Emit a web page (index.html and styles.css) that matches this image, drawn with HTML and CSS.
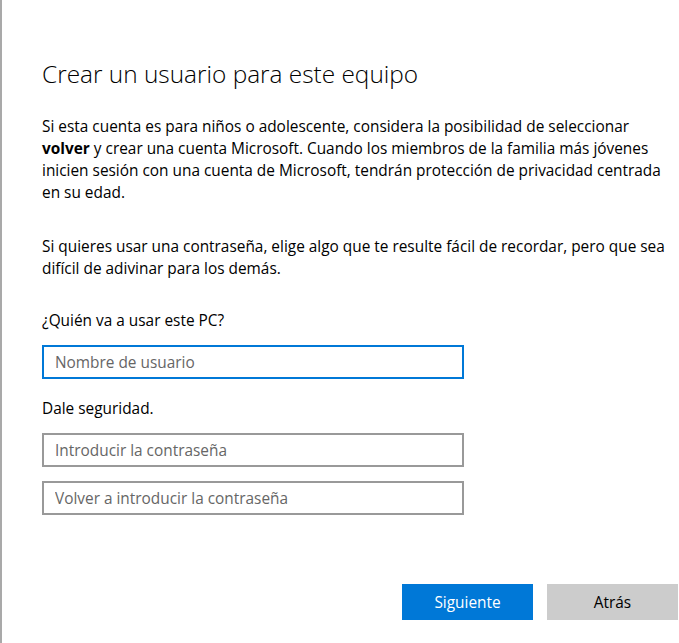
FILE: index.html
```html
<!DOCTYPE html>
<html lang="es">
<head>
    <meta charset="UTF-8">
    <meta name="viewport" content="width=device-width, initial-scale=1.0">
    <title>Crear un usuario para este equipo</title>
    <link rel="stylesheet" href="styles.css">
</head>
<body>

    <div class="window">
        <h1>Crear un usuario para este equipo</h1>

        <p class="intro">Si esta cuenta es para niños o adolescente, considera la posibilidad de seleccionar <b>volver</b> y crear una cuenta Microsoft. Cuando los miembros de la familia más jóvenes inicien sesión con una cuenta de Microsoft, tendrán protección de privacidad centrada en su edad.</p>

        <p class="hint">Si quieres usar una contraseña, elige algo que te resulte fácil de recordar, pero que sea difícil de adivinar para los demás.</p>

        <!-- Usuario -->
        <label class="field-label" for="userName">¿Quién va a usar este PC?</label>
        <input type="text" id="userName" class="field focused" placeholder="Nombre de usuario">

        <!-- Contraseña -->
        <label class="field-label second" for="password">Dale seguridad.</label>
        <input type="password" id="password" class="field" placeholder="Introducir la contraseña">
        <input type="password" id="passwordRepeat" class="field" placeholder="Volver a introducir la contraseña">

        <div class="buttons">
            <button type="button" class="btn primary">Siguiente</button>
            <button type="button" class="btn">Atrás</button>
        </div>
    </div>

</body>
</html>
```

FILE: styles.css
```css
body {
    margin: 0;
    padding: 0;
    background-color: #fff;
    color: #000;
    font-family: "Open Sans", "Noto Sans", sans-serif;
}

.window {
    min-height: 643px;
    box-sizing: border-box;
    border-left: 2px solid #a9a9a9;
    padding: 56px 0 0 40px;
}

h1 {
    margin: 0;
    font-size: 24.4px;
    font-weight: 300;
    line-height: 36px;
}

p {
    margin: 0;
    width: 630px;
    font-size: 15.4px;
    line-height: 22px;
}

.intro {
    margin-top: 24px;
}

.hint {
    margin-top: 32px;
}

.field-label {
    display: block;
    margin-top: 30px;
    font-size: 15.4px;
    line-height: 22px;
}

.field-label.second {
    margin-top: 19px;
}

.field {
    display: block;
    box-sizing: border-box;
    width: 422px;
    height: 34px;
    margin: 14px 0 0 0;
    padding: 0 11px;
    border: 2px solid #999;
    border-radius: 0;
    outline: none;
    background: #fff;
    font-family: inherit;
    font-size: 15.4px;
    color: #000;
}

.field-label + .field {
    margin-top: 13px;
}

.field.focused {
    border-color: #0078d7;
}

.field::placeholder {
    color: #666;
}

.buttons {
    display: flex;
    justify-content: flex-end;
    gap: 14px;
    margin-top: 69px;
    padding-right: 1px;
}

.btn {
    width: 131px;
    height: 36px;
    border: none;
    border-radius: 0;
    background-color: #ccc;
    color: #000;
    font-family: inherit;
    font-size: 15.4px;
    cursor: pointer;
}

.btn.primary {
    background-color: #0078d7;
    color: #fff;
}
```
